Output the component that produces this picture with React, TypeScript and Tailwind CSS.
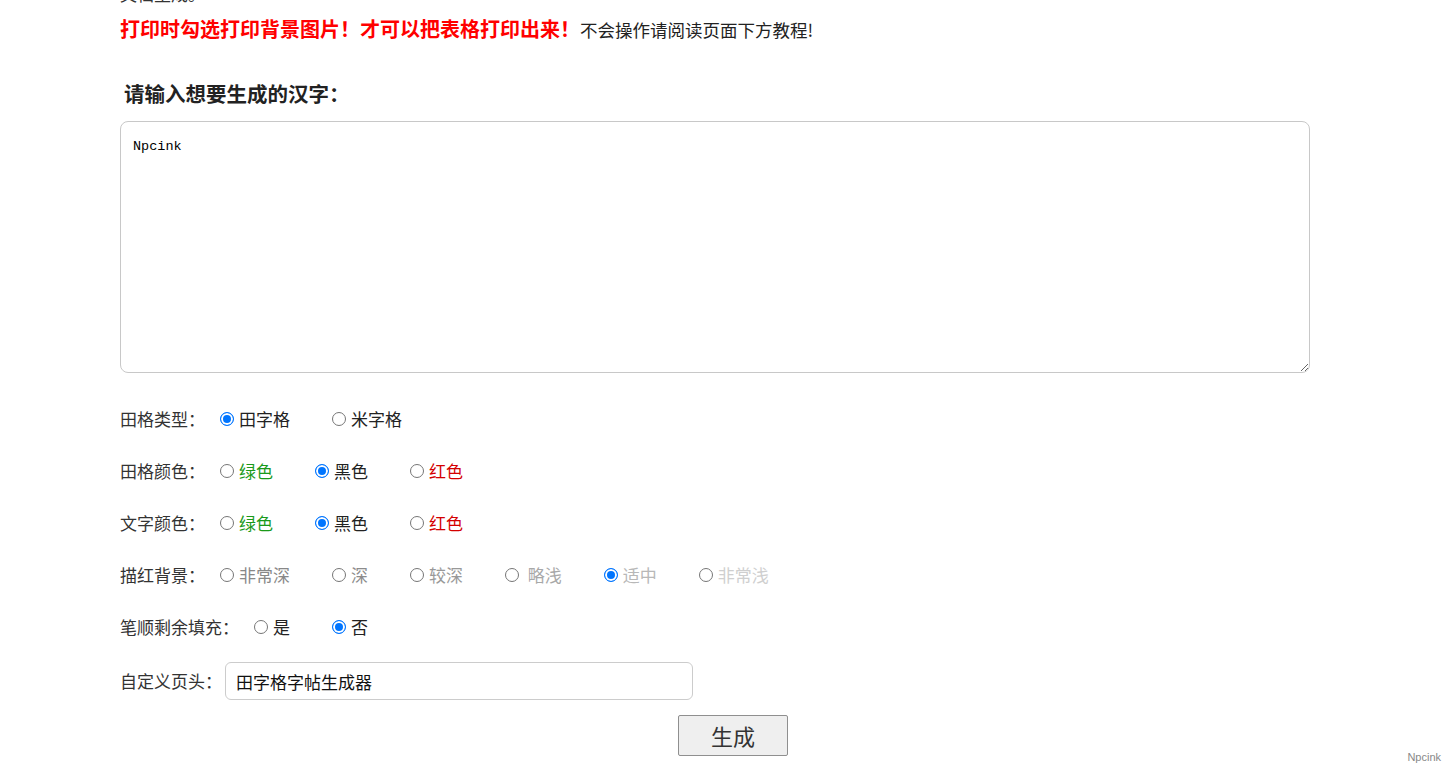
import { useState } from 'react'

const font = { fontFamily: '"Microsoft YaHei", "Noto Sans CJK SC", "Noto Sans", sans-serif' }

type Opt = { label: string; color: string }

function RadioRow({
  title,
  name,
  options,
  initial,
}: {
  title: string
  name: string
  options: Opt[]
  initial: number
}) {
  const [sel, setSel] = useState(initial)
  return (
    <div className="flex items-center h-[52px] text-[17px] text-[#333]">
      <span className="mr-[15px]">{title}</span>
      {options.map((o, i) => (
        <label key={o.label} className="flex items-center mr-[42px] cursor-pointer">
          <input
            type="radio"
            name={name}
            checked={sel === i}
            onChange={() => setSel(i)}
            className="appearance-none m-0 mr-[5px] w-[14px] h-[14px] rounded-full border border-[#767676] bg-white checked:border-[#0075ff] checked:bg-[#0075ff] checked:shadow-[inset_0_0_0_2px_white]"
          />
          <span className={o.color}>{o.label}</span>
        </label>
      ))}
    </div>
  )
}

export default function App() {
  return (
    <div className="relative min-h-[773px] w-full bg-white" style={font}>
      <div className="pl-[120px] w-[1310px]">
        {/* 上一行被截断的文字 */}
        <div className="h-[4px] overflow-hidden">
          <div className="-mt-[16px] text-[17px] text-[#333] leading-[20px]">文档生成。</div>
        </div>

        <div className="mt-[13px] flex items-baseline leading-[24px]">
          <span className="text-[20px] font-bold text-[#ff0000]">打印时勾选打印背景图片！才可以把表格打印出来！</span>
          <span className="text-[17.5px] text-[#222]">不会操作请阅读页面下方教程!</span>
        </div>

        <h2 className="mt-[39px] pl-[4px] text-[20.5px] font-bold text-[#222] leading-[24px]">请输入想要生成的汉字：</h2>

        <textarea
          defaultValue="Npcink"
          className="mt-[16px] block w-[1190px] h-[252px] rounded-[8px] border border-[#c8c8c8] px-[12px] py-[15px] text-[13.5px] text-black outline-none"
          style={{ fontFamily: '"SimSun", "Liberation Mono", monospace' }}
        />

        <div className="mt-[20px]">
          <RadioRow
            title="田格类型："
            name="gridType"
            initial={0}
            options={[
              { label: '田字格', color: 'text-[#222]' },
              { label: '米字格', color: 'text-[#222]' },
            ]}
          />
          <RadioRow
            title="田格颜色："
            name="gridColor"
            initial={1}
            options={[
              { label: '绿色', color: 'text-[#1a9a1a]' },
              { label: '黑色', color: 'text-[#222]' },
              { label: '红色', color: 'text-[#d40000]' },
            ]}
          />
          <RadioRow
            title="文字颜色："
            name="textColor"
            initial={1}
            options={[
              { label: '绿色', color: 'text-[#1a9a1a]' },
              { label: '黑色', color: 'text-[#222]' },
              { label: '红色', color: 'text-[#d40000]' },
            ]}
          />
          <RadioRow
            title="描红背景："
            name="traceBg"
            initial={4}
            options={[
              { label: '非常深', color: 'text-[#888]' },
              { label: '深', color: 'text-[#8c8c8c]' },
              { label: '较深', color: 'text-[#999]' },
              { label: '\u00a0略浅', color: 'text-[#a8a8a8]' },
              { label: '适中', color: 'text-[#b8b8b8]' },
              { label: '非常浅', color: 'text-[#cfcfcf]' },
            ]}
          />
          <RadioRow
            title="笔顺剩余填充："
            name="fill"
            initial={1}
            options={[
              { label: '是', color: 'text-[#222]' },
              { label: '否', color: 'text-[#222]' },
            ]}
          />

          <div className="flex items-center h-[54px] pt-[2px] text-[17px] text-[#333]">
            <span className="mr-[3px]">自定义页头：</span>
            <input
              type="text"
              defaultValue="田字格字帖生成器"
              className="w-[468px] h-[38px] rounded-[6px] border border-[#cccccc] px-[10px] text-[17px] text-[#111] outline-none"
            />
          </div>
        </div>

        <div className="mt-[8px] pl-[558px]">
          <button className="w-[110px] h-[41px] bg-[#efefef] border border-[#8f8f8f] rounded-[2px] text-[22px] text-[#333]">
            生成
          </button>
        </div>
      </div>

      <div className="absolute right-[10px] bottom-[8px] text-[11px] text-[#888]" style={{ fontFamily: 'Arial, "Liberation Sans", sans-serif' }}>
        Npcink
      </div>
    </div>
  )
}
